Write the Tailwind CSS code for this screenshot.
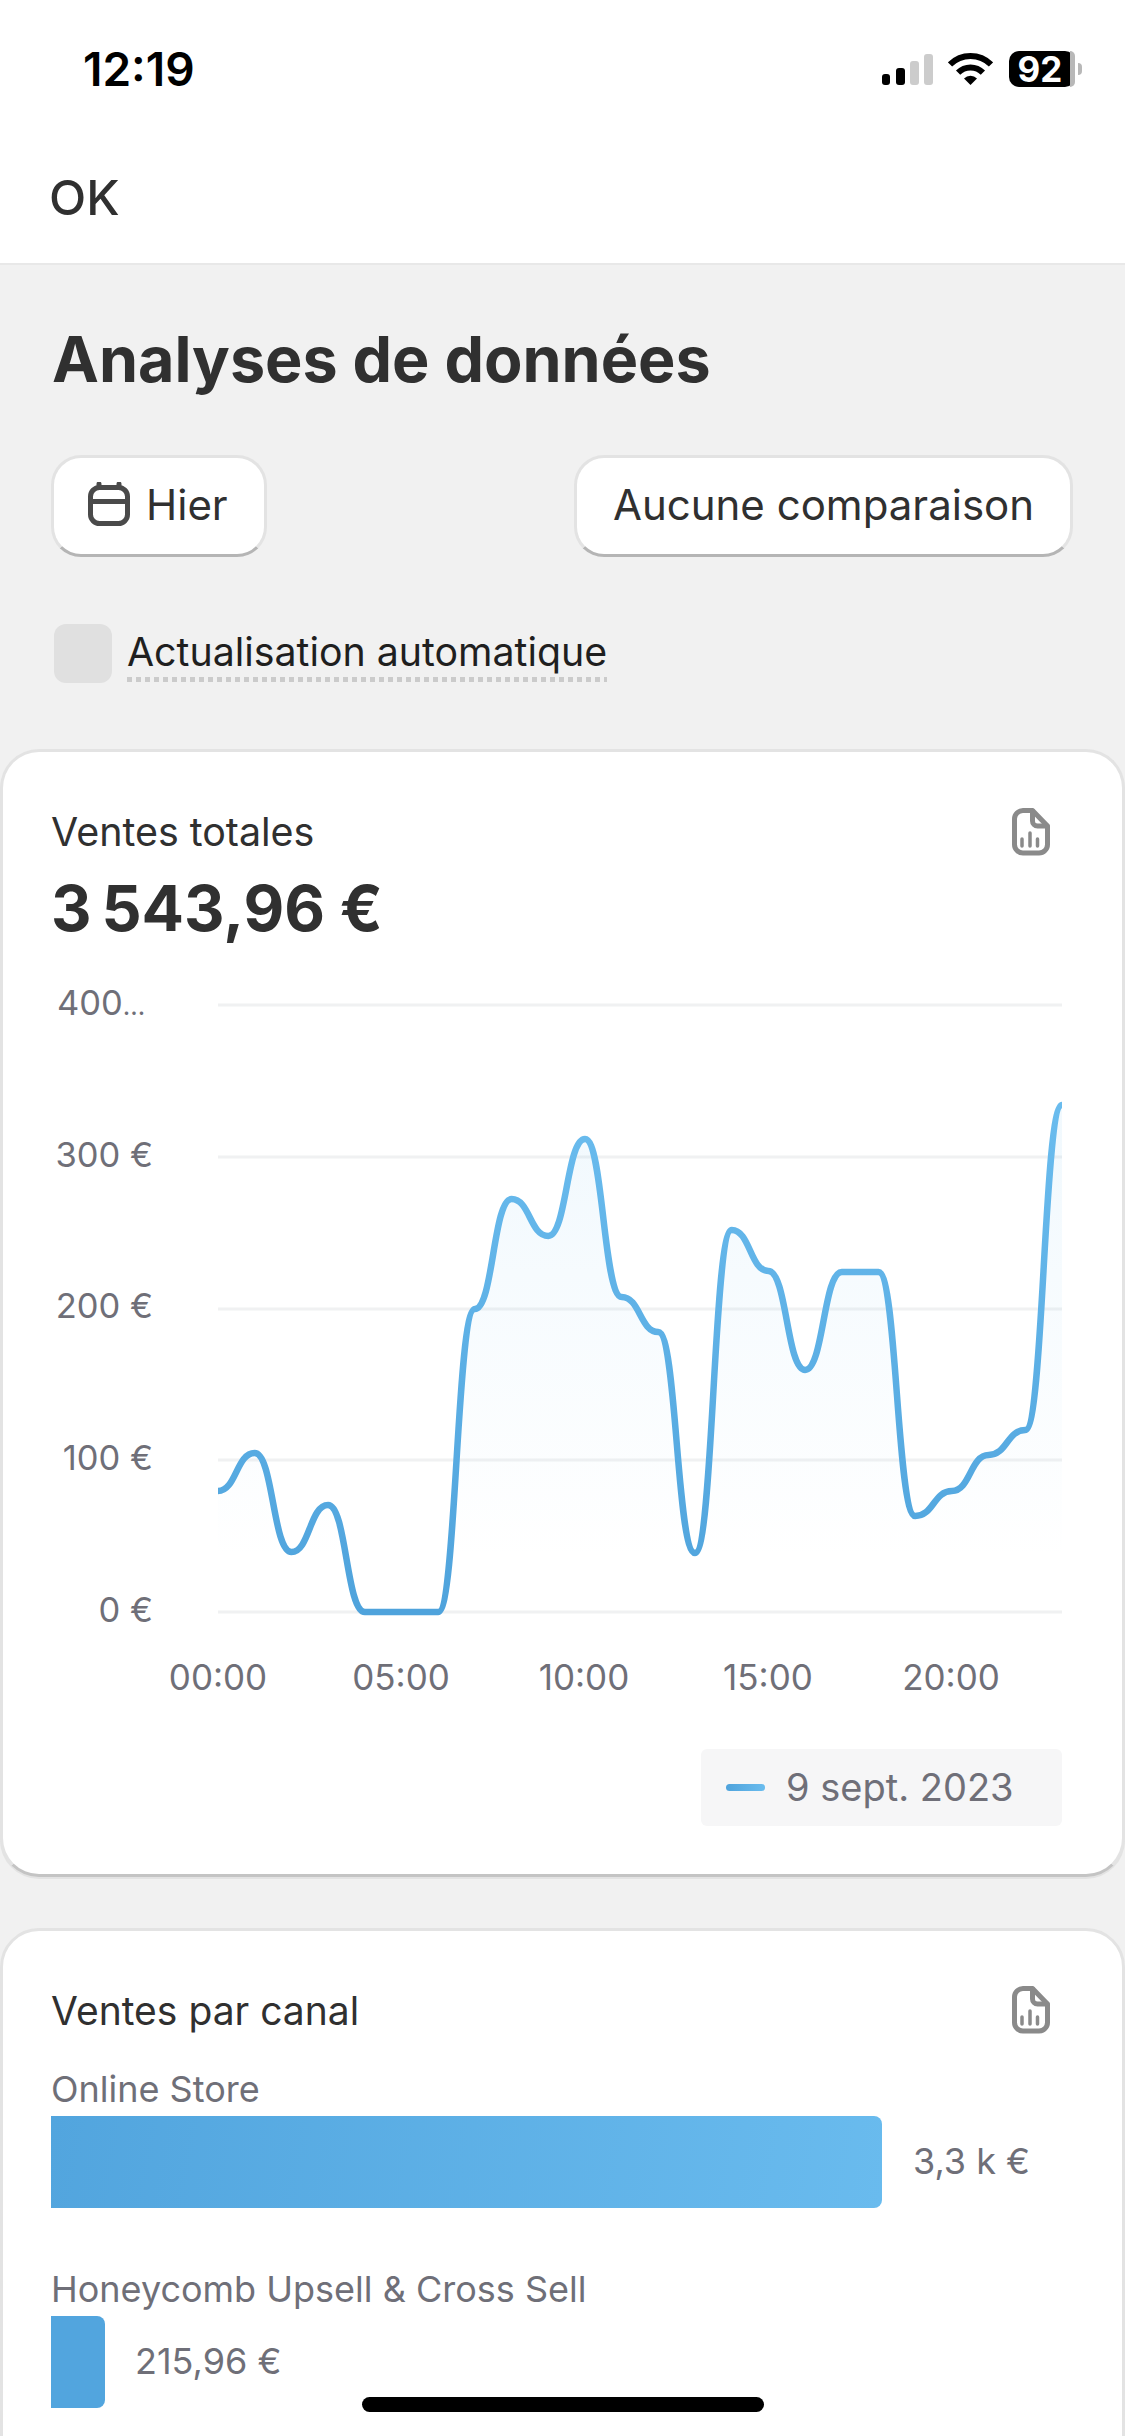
<!DOCTYPE html>
<html lang="fr">
<head>
    <meta charset="UTF-8">
    <title>Analyses de données</title>
    <script src="https://cdn.jsdelivr.net/npm/@tailwindcss/browser@4"></script>
</head>
<body class="bg-[#f1f1f1]">
<div class="relative w-[1125px] h-[2436px] overflow-hidden bg-[#f1f1f1] text-[#303030] font-['Inter',sans-serif]">

    <header class="h-[265px] bg-white border-b-2 border-[#e8e8e8]">
        <div class="flex items-center justify-between h-[138px] pl-[83px] pr-[43px] text-black">
            <span class="text-[46px] leading-none font-semibold">12:19</span>
            <div class="flex items-center">
                <svg class="w-[51px] h-[31px]" viewBox="0 0 51 31">
                    <rect x="0" y="20" width="8" height="11" rx="3"/>
                    <rect x="14" y="14" width="9" height="17" rx="3"/>
                    <rect x="28" y="7" width="9" height="24" rx="3" fill="#cccccc"/>
                    <rect x="42" y="0" width="9" height="31" rx="3" fill="#cccccc"/>
                </svg>
                <svg class="w-[45px] h-[32px] ml-[15px]" viewBox="0 0 45 32">
                    <path d="M2 11.5A29 29 0 0 1 43 11.5" fill="none" stroke="black" stroke-width="6"/>
                    <path d="M10.1 19.6A17.5 17.5 0 0 1 34.9 19.6" fill="none" stroke="black" stroke-width="6"/>
                    <path d="M22.5 32L16 25.5A9.2 9.2 0 0 1 29 25.5Z"/>
                </svg>
                <div class="relative flex items-center justify-center w-[66px] h-[36px] ml-[16px] rounded-[10px] bg-black">
                    <span class="absolute right-0 top-0 bottom-0 w-[5px] rounded-r-[10px] bg-[#b8b8b8]"></span>
                    <span class="text-white text-[35px] leading-[36px] font-bold pr-[4px]">92</span>
                </div>
                <span class="w-[4px] h-[12px] ml-[3px] rounded-r-full bg-[#b8b8b8]"></span>
            </div>
        </div>
        <div class="pl-[49px] pt-[30px] text-[48.500px] leading-[60px] font-[550]">OK</div>
    </header>

    <main>
        <h1 class="pl-[52px] pt-[59px] text-[62.800px] leading-[70px] font-bold">Analyses de données</h1>

        <div class="flex justify-between pl-[51px] pr-[52px] mt-[61px]">
            <button class="flex items-center h-[102px] w-[216px] pl-[34px] pb-[4px] gap-[16px] bg-white rounded-[30px] border-[3px] border-[#e3e3e3] border-b-[#b5b5b5] text-[42px] font-[440]">
                <svg class="w-[42px] h-[44px] shrink-0" viewBox="0 0 42 44" fill="none" stroke="#4a4a4a" stroke-width="5" stroke-linecap="round">
                    <rect x="2.5" y="5.5" width="37" height="36" rx="9"/>
                    <path d="M2.5 19.5H39.5"/>
                    <path d="M11 2V5M31 2V5"/>
                </svg>
                Hier
            </button>
            <button class="h-[102px] w-[499px] pb-[4px] bg-white rounded-[30px] border-[3px] border-[#e3e3e3] border-b-[#b5b5b5] text-[42px] font-[440]">Aucune comparaison</button>
        </div>

        <label class="flex items-start pl-[54px] mt-[67px]">
            <span class="w-[58px] h-[59px] rounded-[12px] bg-[#e0e0e0]"></span>
            <span class="ml-[15px] mt-[3px] pb-[5px] text-[39.300px] leading-[50px] text-[#1f1f1f] bg-[repeating-linear-gradient(90deg,#cbcbcb_0_5px,transparent_5px_9px)] bg-[length:100%_5px] bg-bottom bg-no-repeat">Actualisation automatique</span>
        </label>

        <section class="mt-[66px] h-[1128px] bg-white rounded-[39px] border-[3px] border-[#e3e3e3] border-b-[#c4c4c4] shadow-[0_2px_0_#e3e3e3]">
            <div class="flex items-start justify-between pl-[48px] pr-[72px] pt-[56px]">
                <div>
                    <h2 class="text-[39.400px] leading-[48px]">Ventes totales</h2>
                    <p class="mt-[17px] text-[62.800px] leading-[70px] font-bold">3&#8239;543,96&nbsp;€</p>
                </div>
                <svg class="w-[38px] h-[48px]" viewBox="0 0 38 48" fill="none" stroke="#8a8a8a" stroke-width="5" stroke-linecap="round" stroke-linejoin="round">
                    <path d="M20.5 2.5H11A8.5 8.5 0 0 0 2.5 11V36.5A8.5 8.5 0 0 0 11 45H27A8.5 8.5 0 0 0 35.5 36.5V18Z"/>
                    <path d="M20.5 3V13A5 5 0 0 0 25.5 18H35"/>
                    <path d="M10 31V38M18 25V38M25.500 31V38" stroke-width="3.500"/>
                </svg>
            </div>

            <svg class="block mt-[33px] w-[1119px] h-[745px]" viewBox="3 975 1119 745" font-size="34.500" fill="#6f6f78">
                <defs>
                    <linearGradient id="lineGrad" gradientUnits="userSpaceOnUse" x1="0" y1="1101" x2="0" y2="1611">
                        <stop offset="0" stop-color="#6abcee"/>
                        <stop offset="1" stop-color="#4fa3dc"/>
                    </linearGradient>
                    <linearGradient id="areaGrad" gradientUnits="userSpaceOnUse" x1="0" y1="1130" x2="0" y2="1560">
                        <stop offset="0" stop-color="#6abcee" stop-opacity="0.09"/>
                        <stop offset="1" stop-color="#6abcee" stop-opacity="0"/>
                    </linearGradient>
                </defs>
                <g stroke="#f0f1f2" stroke-width="3">
                    <path d="M218 1004H1062M218 1156H1062M218 1308H1062M218 1459H1062M218 1611H1062"/>
                </g>
                <path id="salesArea" fill="url(#areaGrad)"/>
                <path id="salesLine" fill="none" stroke="url(#lineGrad)" stroke-width="6.500"/>
                <g>
                    <text x="57" y="1014">400<tspan font-size="26">…</tspan></text>
                    <text x="153" y="1166" text-anchor="end">300 €</text>
                    <text x="153" y="1317" text-anchor="end">200 €</text>
                    <text x="153" y="1469" text-anchor="end">100 €</text>
                    <text x="153" y="1621" text-anchor="end">0 €</text>
                </g>
                <g text-anchor="middle" font-size="35">
                    <text x="218" y="1689">00:00</text>
                    <text x="401" y="1689">05:00</text>
                    <text x="584" y="1689">10:00</text>
                    <text x="768" y="1689">15:00</text>
                    <text x="951" y="1689">20:00</text>
                </g>
            </svg>

            <div class="flex justify-end pr-[60px] mt-[28px]">
                <div class="flex items-center w-[361px] h-[77px] pl-[25px] rounded-[6px] bg-[#f6f6f7]">
                    <span class="w-[39px] h-[7px] rounded-full bg-gradient-to-r from-[#4fa3dc] to-[#6abcee]"></span>
                    <span class="ml-[21px] text-[38px] text-[#6f6f78]">9 sept. 2023</span>
                </div>
            </div>
        </section>

        <section class="mt-[51px] h-[600px] bg-white rounded-[39px] border-[3px] border-[#e3e3e3]">
            <div class="flex items-start justify-between pl-[48px] pr-[72px] pt-[55px]">
                <h2 class="text-[39px] leading-[48px] mt-[1px]">Ventes par canal</h2>
                <svg class="w-[38px] h-[48px]" viewBox="0 0 38 48" fill="none" stroke="#8a8a8a" stroke-width="5" stroke-linecap="round" stroke-linejoin="round">
                    <path d="M20.5 2.5H11A8.5 8.5 0 0 0 2.5 11V36.5A8.5 8.5 0 0 0 11 45H27A8.5 8.5 0 0 0 35.5 36.5V18Z"/>
                    <path d="M20.5 3V13A5 5 0 0 0 25.5 18H35"/>
                    <path d="M10 31V38M18 25V38M25.500 31V38" stroke-width="3.500"/>
                </svg>
            </div>
            <div class="pl-[48px] text-[36px] text-[#6f6f78]">
                <p class="mt-[30px] leading-[48px]">Online Store</p>
                <div class="flex items-center mt-[3px]">
                    <div class="w-[831px] h-[92px] rounded-r-[8px] bg-[linear-gradient(100deg,#52a5de,#69bbee)]"></div>
                    <span class="ml-[31px] pb-[2px]">3,3 k €</span>
                </div>
                <p class="mt-[57px] leading-[48px]">Honeycomb Upsell &amp; Cross Sell</p>
                <div class="flex items-center mt-[3px]">
                    <div class="w-[54px] h-[92px] rounded-r-[8px] bg-[#52a5de]"></div>
                    <span class="ml-[30px] pb-[2px]">215,96 €</span>
                </div>
            </div>
        </section>
    </main>

    <div class="absolute left-[362px] top-[2397px] w-[402px] h-[15px] rounded-full bg-black"></div>
</div>

<script>
    // y position of the curve for each hour, 00:00 to 23:00
    const points = [1490, 1452, 1551, 1504, 1611, 1611, 1611, 1308, 1198, 1235, 1138, 1296, 1331, 1552, 1229, 1270, 1369, 1271, 1271, 1515, 1490, 1454, 1429, 1104];
    const step = 844 / 23;
    let d = 'M218 ' + points[0];
    for (let i = 1; i < points.length; i++) {
        const x0 = 218 + step * (i - 1);
        const x1 = 218 + step * i;
        d += ` C${(x0 + step * 0.5).toFixed(1)} ${points[i - 1]} ${(x1 - step * 0.5).toFixed(1)} ${points[i]} ${x1.toFixed(1)} ${points[i]}`;
    }
    document.getElementById('salesLine').setAttribute('d', d);
    document.getElementById('salesArea').setAttribute('d', d + ' L1062 1611 L218 1611 Z');
</script>
</body>
</html>
